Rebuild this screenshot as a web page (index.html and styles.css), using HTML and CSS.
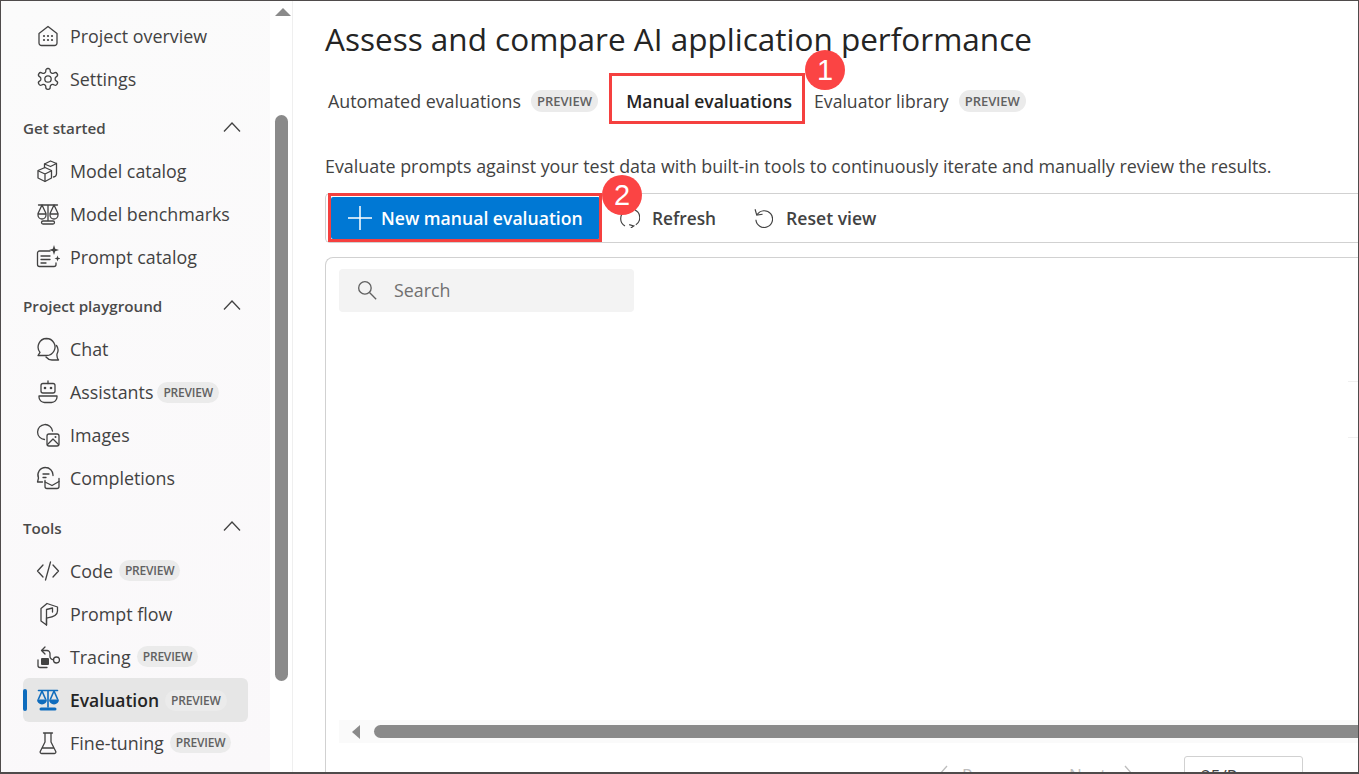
FILE: index.html
```html
<!DOCTYPE html>
<html lang="en">
<head>
  <meta charset="UTF-8">
  <title>Evaluation</title>
  <link rel="stylesheet" href="styles.css">
</head>
<body>
<div class="frame">
  <aside class="side">
    <nav class="nav">
      <a class="item"><svg class="ico" viewBox="0 0 24 24"><path d="M3 9.500 12 2.500l9 7V19a2.500 2.500 0 0 1-2.500 2.500h-13A2.500 2.500 0 0 1 3 19z"/><g class="dots"><circle cx="8" cy="12" r="1.100"/><circle cx="12" cy="12" r="1.100"/><circle cx="16" cy="12" r="1.100"/><circle cx="8" cy="16" r="1.100"/><circle cx="12" cy="16" r="1.100"/><circle cx="16" cy="16" r="1.100"/></g></svg><span>Project overview</span></a>
      <a class="item"><svg class="ico" viewBox="0 0 24 24"><path d="M12.220 1.500h-.44a2 2 0 0 0-2 2v.68a2 2 0 0 1-1 1.730l-.43.25a2 2 0 0 1-2 0l-.65-.33a2 2 0 0 0-2.730.73l-.22.38a2 2 0 0 0 .73 2.730l.4.25a2 2 0 0 1 1 1.720v.51a2 2 0 0 1-1 1.740l-.4.24a2 2 0 0 0-.73 2.730l.22.38a2 2 0 0 0 2.730.73l.65-.33a2 2 0 0 1 2 0l.43.25a2 2 0 0 1 1 1.730v.68a2 2 0 0 0 2 2h.44a2 2 0 0 0 2-2v-.68a2 2 0 0 1 1-1.730l.43-.25a2 2 0 0 1 2 0l.65.33a2 2 0 0 0 2.730-.73l.22-.39a2 2 0 0 0-.73-2.730l-.4-.23a2 2 0 0 1-1-1.740v-.5a2 2 0 0 1 1-1.740l.4-.24a2 2 0 0 0 .73-2.730l-.22-.38a2 2 0 0 0-2.730-.73l-.65.33a2 2 0 0 1-2 0l-.43-.25a2 2 0 0 1-1-1.730V3.500a2 2 0 0 0-2-2z"/><circle cx="12" cy="12" r="3.200"/></svg><span>Settings</span></a>

      <div class="group"><span>Get started</span><svg class="chev" viewBox="0 0 18 10"><path d="M1 9.500 9 1l8 8.500"/></svg></div>
      <a class="item"><svg class="ico" viewBox="0 0 24 24"><path d="M2 11.500 9 8.500l6.500 3v7.500L9 22.500 2 19z"/><path d="M2.500 12 9 15l6-3M9 15v7"/><path d="M8.500 5 14.500 2l6 2.500M8.500 5v3.500M20.500 4.500V15a3.500 3.500 0 0 1-3 3M8.500 5l6 2.500 6-3"/></svg><span>Model catalog</span></a>
      <a class="item"><svg class="ico" viewBox="0 0 24 24"><path d="M2.500 3h19M12 3v16M7 19h10a1.500 1.500 0 0 1 0 3H7a1.500 1.500 0 0 1 0-3z"/><path d="M6 3 2 11.500v1.500a4 4 0 0 0 8 0v-1.500zM2 12h8M18 3l-4 8.500v1.500a4 4 0 0 0 8 0v-1.500zM14 12h8"/></svg><span>Model benchmarks</span></a>
      <a class="item"><svg class="ico" viewBox="0 0 24 24"><path d="M14 6H3.500A2 2 0 0 0 1.500 8v11.500a2 2 0 0 0 2 2H18a2 2 0 0 0 2-2V18"/><path d="M5 11h9M5 14.500h9M5 18h5"/><path class="solid" d="M18 0l1.200 3.800L23 5l-3.800 1.200L18 10l-1.200-3.800L13 5l3.800-1.200zM21.500 10.500l.8 2.200 2.200.8-2.200.8-.8 2.200-.8-2.200-2.200-.8 2.200-.8z"/></svg><span>Prompt catalog</span></a>

      <div class="group"><span>Project playground</span><svg class="chev" viewBox="0 0 18 10"><path d="M1 9.500 9 1l8 8.500"/></svg></div>
      <a class="item"><svg class="ico" viewBox="0 0 24 24"><path d="M10.500 1.500a8.500 8.500 0 0 1 7.500 12.500c-1.500 2.800-4.500 4.500-7.500 4.500H2l2-3.200A8.500 8.500 0 0 1 10.500 1.500z"/><path d="M20.500 8.500a8 8 0 0 1 .5 8.500c-.2 1.500 0 4 1.500 6h-6.500a8 8 0 0 1-6-3"/></svg><span>Chat</span></a>
      <a class="item"><svg class="ico" viewBox="0 0 24 24"><rect x="5" y="3.500" width="14" height="9.500" rx="2"/><path d="M12 1v2.500M3 16h18v1a5.500 5.500 0 0 1-5.500 5.500h-7A5.500 5.500 0 0 1 3 17z"/><g class="dots"><circle cx="9" cy="8" r="1.300"/><circle cx="15" cy="8" r="1.300"/></g></svg><span>Assistants</span><em class="pill pill-tight">PREVIEW</em></a>
      <a class="item"><svg class="ico" viewBox="0 0 24 24"><path d="M8.500 16.500A7.500 7.500 0 1 1 16.500 8"/><rect x="11" y="11" width="12" height="12" rx="2"/><path d="m11.500 21.500 5.500-5.500 5.500 5.500"/><circle class="dots" cx="19.500" cy="14" r="1"/></svg><span>Images</span></a>
      <a class="item"><svg class="ico" viewBox="0 0 24 24"><path d="M9.500 1.500a7.500 7.500 0 0 1 7.500 7.500v.5M9.500 1.500A7.500 7.500 0 0 0 2.500 12l-1 4h5"/><path d="M7 8h6M7 11.500h3"/><path d="M9 14.500v6a2 2 0 0 0 2 2h10a2 2 0 0 0 2-2v-8"/><path d="M9 16l7 3.500 7-4"/></svg><span>Completions</span></a>

      <div class="group group-tools"><span>Tools</span><svg class="chev" viewBox="0 0 18 10"><path d="M1 9.500 9 1l8 8.500"/></svg></div>
      <a class="item"><svg class="ico" viewBox="0 0 24 24"><path d="M7 6 1.500 12 7 18M17 6l5.500 6-5.500 6M14.500 3l-5 18"/></svg><span>Code</span><em class="pill">PREVIEW</em></a>
      <a class="item"><svg class="ico" viewBox="0 0 24 24"><path d="M5 6.500V19l5.500 4v-7c3-.5 11-1 11-7V5L11 1.500z"/><path d="M10.500 23V7.500l6-1.500v4"/></svg><span>Prompt flow</span></a>
      <a class="item"><svg class="ico" viewBox="0 0 24 24"><path d="M9 2 5.500 5.500 9 9M5.500 5.500H11a3 3 0 0 1 3 3v3a3 3 0 0 0 3.500 3"/><circle cx="20.500" cy="15" r="3"/><rect class="solid" x="5" y="13" width="8" height="7" rx="1"/><path d="M2 15v5.500a2 2 0 0 0 2 2h7"/></svg><span>Tracing</span><em class="pill">PREVIEW</em></a>
      <a class="item active"><svg class="ico ico-blue" viewBox="0 0 24 24"><path d="M2.500 2.500h19M12 2.500V19"/><path class="thick" d="M5 21h14"/><path d="M6 3 2.500 11M6 3l3.500 8M18 3l-3.500 8M18 3l3.500 8"/><path class="solid" d="M1 11.500h10a5 5 0 0 1-10 0zM13 11.500h10a5 5 0 0 1-10 0z"/></svg><span>Evaluation</span><em class="pill">PREVIEW</em></a>
      <a class="item"><svg class="ico" viewBox="0 0 24 24"><path d="M7.500 2h9M9 2v9l-4.500 9a1.500 1.500 0 0 0 1.300 2.500h12.400a1.500 1.500 0 0 0 1.300-2.500L15 11V2M6.500 17h11"/></svg><span>Fine-tuning</span><em class="pill">PREVIEW</em></a>
    </nav>
    <div class="side-scroll">
      <div class="arrow-up"></div>
      <div class="thumb"></div>
    </div>
  </aside>

  <main class="main">
    <h1 class="title">Assess and compare AI application performance</h1>
    <div class="tabs">
      <a class="tab">Automated evaluations</a><em class="pill pill-tab">PREVIEW</em>
      <a class="tab tab-on">Manual evaluations</a>
      <a class="tab tab-last">Evaluator library</a><em class="pill pill-tab">PREVIEW</em>
    </div>
    <p class="desc">Evaluate prompts against your test data with built-in tools to continuously iterate and manually review the results.</p>

    <div class="toolbar">
      <button class="btn-new"><svg class="plus" viewBox="0 0 24 24"><path d="M12 0v24M0 12h24"/></svg>New manual evaluation</button>
      <button class="btn-plain btn-refresh"><svg class="ico-sm" viewBox="0 0 24 24"><path d="M6 21.500A10 10 0 0 1 6 4M18 2.500a10 10 0 0 1 1 17.500"/><path d="m11 20 5.500 1.500L13 24"/></svg>Refresh</button>
      <button class="btn-plain btn-reset"><svg class="ico-sm" viewBox="0 0 24 24"><path d="M5 8a10 10 0 1 1-1.500 6"/><path d="M2.500 1.500 4.500 8.500l7-1"/></svg>Reset view</button>
    </div>

    <section class="card">
      <div class="search">
        <svg class="search-ico" viewBox="0 0 24 24"><circle cx="9.500" cy="9.500" r="7.500"/><path d="m15 15 8 8"/></svg>
        <span>Search</span>
      </div>
      <div class="rows">
        <div class="row-line"></div>
        <div class="row-line"></div>
      </div>
      <div class="hscroll">
        <div class="arrow-left"></div>
        <div class="hthumb"></div>
      </div>
      <div class="pager">
        <svg class="pg-chev" viewBox="0 0 10 20"><path d="M9 1 1 10l8 9"/></svg>
        <span class="pg-prev">Prev</span>
        <span class="pg-next">Next</span>
        <svg class="pg-chev" viewBox="0 0 10 20"><path d="m1 1 8 9-8 9"/></svg>
        <div class="pg-size">25/Page</div>
      </div>
    </section>
  </main>

  <div class="mark mark-tab"></div>
  <div class="mark mark-btn"></div>
  <div class="num num-1">1</div>
  <div class="num num-2">2</div>
</div>
</body>
</html>
```

FILE: styles.css
```css
html, body {
  margin: 0;
  padding: 0;
  height: 100%;
  overflow: hidden;
  background: #fff;
}

.frame {
  position: relative;
  box-sizing: border-box;
  height: 774px;
  width: 1359px;
  display: flex;
  overflow: hidden;
  border: 1px solid #4f4b4b;
  border-bottom-width: 2px;
  font-family: "Open Sans", "Noto Sans", sans-serif;
  color: #424242;
}

/* left nav */
.side {
  flex: none;
  width: 291px;
  display: flex;
  background: #fff;
  border-right: 1px solid #efefef;
  box-sizing: content-box;
}

.nav {
  flex: none;
  box-sizing: border-box;
  width: 269px;
  padding: 13.5px 0 0 22px;
  background: linear-gradient(160deg, #fbfbfb, #faf8fa);
}

.item {
  position: relative;
  display: flex;
  align-items: center;
  box-sizing: border-box;
  width: 225px;
  height: 43px;
  padding-left: 14px;
  font-size: 17.85px;
  white-space: nowrap;
}

.item.active {
  height: 44px;
  margin-bottom: -1px;
  background: #e6e6e6;
  border-radius: 6px;
  color: #242424;
  font-size: 17.5px;
  font-weight: 600;
}

.item.active::before {
  content: "";
  position: absolute;
  left: 0;
  top: 11px;
  width: 4px;
  height: 22px;
  border-radius: 2px;
  background: #0f6cbd;
}

.ico {
  flex: none;
  width: 24px;
  height: 24px;
  margin: 0 10px 0 -1px;
  fill: none;
  stroke: #424242;
  stroke-width: 1.3;
  stroke-linejoin: round;
  stroke-linecap: round;
}

.ico .dots, .ico .solid {
  fill: #424242;
  stroke: none;
}

.ico circle.dots {
  fill: #424242;
  stroke: none;
}

.ico-blue {
  stroke: #0f6cbd;
  stroke-width: 1.6;
}

.ico-blue .solid {
  fill: #0f6cbd;
}

.ico-blue .thick {
  stroke-width: 3;
}

.group {
  display: flex;
  align-items: center;
  justify-content: space-between;
  box-sizing: border-box;
  width: 218px;
  height: 43px;
  margin-top: 6px;
  font-size: 15.2px;
  font-weight: 600;
  color: #4a4a4a;
}

.group-tools {
  margin-top: 6.5px;
}

.chev {
  width: 18px;
  height: 10px;
  margin-top: -3px;
  fill: none;
  stroke: #424242;
  stroke-width: 1.3;
}

.pill {
  flex: none;
  display: inline-block;
  margin-left: 6px;
  padding: 0 6px;
  height: 21px;
  line-height: 21px;
  border-radius: 11px;
  background: #ebebeb;
  font-style: normal;
  font-size: 12px;
  font-weight: 600;
  color: #616161;
  letter-spacing: -0.2px;
}

.pill-tight {
  margin-left: 4px;
}

.side-scroll {
  position: relative;
  flex: 1;
}

.arrow-up {
  position: absolute;
  left: 5px;
  top: 7px;
  border-left: 8px solid transparent;
  border-right: 8px solid transparent;
  border-bottom: 8px solid #8a8a8a;
}

.thumb {
  position: absolute;
  left: 5px;
  top: 114px;
  width: 13px;
  height: 566px;
  border-radius: 7px;
  background: #8a8a8a;
}

/* main area */
.main {
  flex: 1;
  min-width: 0;
  padding: 17px 0 0 32px;
}

.title {
  margin: 0;
  font-size: 31.5px;
  line-height: 42px;
  font-weight: 500;
  color: #242424;
  white-space: nowrap;
}

.tabs {
  display: flex;
  align-items: center;
  height: 50px;
  margin-top: 16px;
  font-size: 17.85px;
}

.tab {
  margin-left: 3px;
  white-space: nowrap;
}

.tab-on {
  margin-left: 28px;
  color: #242424;
  font-size: 17.5px;
  font-weight: 600;
}

.tab-last {
  margin-left: 22px;
  font-size: 17.6px;
}

.pill-tab {
  margin-left: 10px;
  padding: 0 6px;
  height: 22px;
  line-height: 22px;
  font-size: 13px;
  letter-spacing: 0;
}

.desc {
  margin: 28px 0 0;
  font-size: 17.87px;
  line-height: 24px;
  color: #424242;
  white-space: nowrap;
}

.toolbar {
  display: flex;
  align-items: center;
  box-sizing: border-box;
  height: 50px;
  margin-top: 15px;
  padding-left: 5px;
  border: 1px solid #d1d1d1;
  border-right: 0;
  border-radius: 5px 0 0 5px;
}

.toolbar button {
  display: flex;
  align-items: center;
  border: 0;
  background: none;
  font-family: inherit;
  cursor: pointer;
  white-space: nowrap;
}

.toolbar .btn-new {
  box-sizing: border-box;
  width: 269px;
  height: 42px;
  padding: 0 0 1px 17px;
  background: #0078d4;
  color: #fff;
  font-size: 17.6px;
  font-weight: 600;
  border-radius: 2px;
}

.plus {
  width: 24px;
  height: 24px;
  margin: 1px 9px 0 0;
  fill: none;
  stroke: #fff;
  stroke-width: 1.5;
}

.toolbar .btn-plain {
  padding: 0;
  color: #424242;
  font-size: 17.3px;
  font-weight: 600;
}

.btn-refresh {
  margin-left: 20px;
}

.toolbar .btn-reset {
  margin-left: 37px;
  font-size: 17.6px;
}

.ico-sm {
  flex: none;
  width: 20px;
  height: 20px;
  margin-right: 12px;
  fill: none;
  stroke: #424242;
  stroke-width: 1.4;
}

.btn-reset .ico-sm {
  margin-right: 13px;
}

.card {
  box-sizing: border-box;
  height: 560px;
  margin-top: 14px;
  padding: 11px 0 0 13px;
  border: 1px solid #d1d1d1;
  border-right: 0;
  border-radius: 8px 0 0 0;
}

.search {
  display: flex;
  align-items: center;
  width: 295px;
  height: 43px;
  padding: 0 0 2px 18px;
  box-sizing: border-box;
  background: #f3f3f3;
  border-radius: 4px;
  font-size: 17.85px;
  color: #707070;
}

.search-ico {
  width: 20px;
  height: 20px;
  margin-right: 17px;
  fill: none;
  stroke: #616161;
  stroke-width: 1.6;
}

.rows {
  display: flex;
  flex-direction: column;
  align-items: flex-end;
  gap: 55px;
  padding-top: 69px;
  box-sizing: border-box;
  height: 408px;
}

.row-line {
  width: 10px;
  height: 1px;
  background: #f0f0f0;
}

.hscroll {
  display: flex;
  align-items: center;
  height: 23px;
  background: #fafafa;
}

.arrow-left {
  margin-left: 13px;
  border-top: 7px solid transparent;
  border-bottom: 7px solid transparent;
  border-right: 8px solid #8a8a8a;
}

.hthumb {
  flex: 1;
  height: 13px;
  margin-left: 14px;
  border-radius: 7px 0 0 7px;
  background: #8a8a8a;
}

.pager {
  display: flex;
  align-items: flex-start;
  justify-content: flex-end;
  height: 44px;
  margin-top: 13px;
  padding-right: 55px;
  font-size: 17px;
  color: #bdbdbd;
}

.pg-chev {
  flex: none;
  width: 10px;
  height: 20px;
  margin-top: 9px;
  fill: none;
  stroke: #bdbdbd;
  stroke-width: 1.3;
}

.pg-prev {
  width: 37px;
  margin: 7px 70px 0 14px;
}

.pg-next {
  width: 40px;
  margin: 7px 15px 0 0;
}

.pg-size {
  box-sizing: border-box;
  width: 119px;
  height: 44px;
  margin-left: 50px;
  padding: 7px 0 0 16px;
  border: 1px solid #d1d1d1;
  border-radius: 3px;
  color: #424242;
}

/* red annotations on top of the screenshot */
.mark {
  position: absolute;
  box-sizing: border-box;
  border: 3px solid #f5403f;
}

.mark-tab {
  left: 608px;
  top: 72px;
  width: 196px;
  height: 51px;
}

.mark-btn {
  left: 327px;
  top: 192px;
  width: 274px;
  height: 49px;
}

.num {
  position: absolute;
  width: 40px;
  height: 40px;
  line-height: 40px;
  border-radius: 50%;
  background: #fb4444;
  color: #fff;
  text-align: center;
  font-family: "Liberation Sans", sans-serif;
  font-size: 29px;
}

.num-1 {
  left: 804px;
  top: 49px;
}

.num-2 {
  left: 601px;
  top: 174px;
}
```
